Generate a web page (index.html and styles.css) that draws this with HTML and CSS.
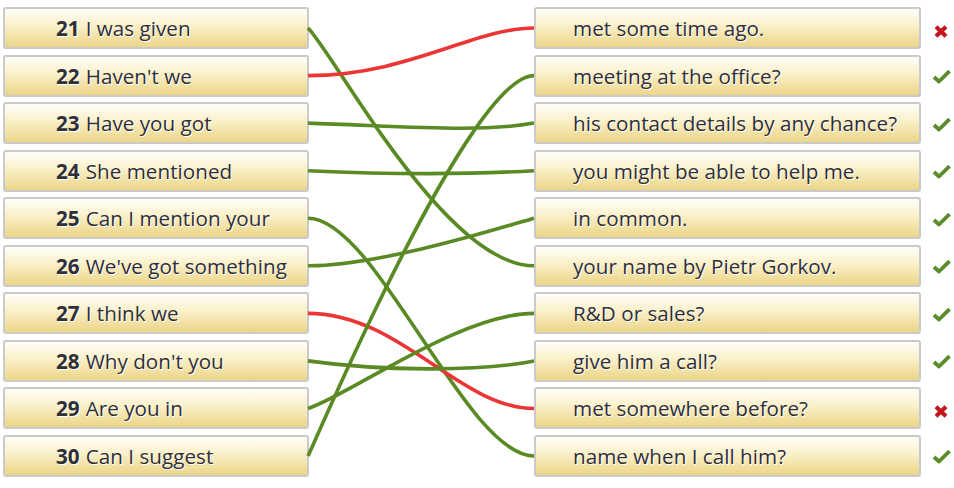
FILE: index.html
```html
<!DOCTYPE html>
<html lang="en">
<head>
<meta charset="utf-8">
<title>Matching exercise</title>
<link rel="stylesheet" href="styles.css">
</head>
<body>
<div class="match">
  <div class="col left">
    <div class="item"><b>21</b> I was given</div>
    <div class="item"><b>22</b> Haven't we</div>
    <div class="item"><b>23</b> Have you got</div>
    <div class="item"><b>24</b> She mentioned</div>
    <div class="item"><b>25</b> Can I mention your</div>
    <div class="item"><b>26</b> We've got something</div>
    <div class="item"><b>27</b> I think we</div>
    <div class="item"><b>28</b> Why don't you</div>
    <div class="item"><b>29</b> Are you in</div>
    <div class="item"><b>30</b> Can I suggest</div>
  </div>
  <svg class="links" width="225" height="470" viewBox="309 7 225 470">
    <path class="ok" d="M308,28 C335,55 445,265.8 534,265.8"/>
    <path class="bad" d="M308,75.6 C408,75.6 474,28 534,28"/>
    <path class="ok" d="M308,123.1 C400,126 480,133 534,123.1"/>
    <path class="ok" d="M308,170.7 C380,174 460,175 534,170.7"/>
    <path class="ok" d="M308,218.2 C376,218.2 466,456 534,456"/>
    <path class="ok" d="M308,265.8 C380,265.8 500,228 534,218.2"/>
    <path class="bad" d="M308,313.4 C400,313.4 460,408.5 534,408.5"/>
    <path class="ok" d="M308,360.9 C380,371 480,372 534,360.9"/>
    <path class="ok" d="M308,408.5 C350,395 460,313.4 534,313.4"/>
    <path class="ok" d="M308,456 C316,440 470,75.6 534,75.6"/>
  </svg>
  <div class="col right">
    <div class="item">met some time ago.</div>
    <div class="item">meeting at the office?</div>
    <div class="item">his contact details by any chance?</div>
    <div class="item">you might be able to help me.</div>
    <div class="item">in common.</div>
    <div class="item">your name by Pietr Gorkov.</div>
    <div class="item">R&amp;D or sales?</div>
    <div class="item">give him a call?</div>
    <div class="item">met somewhere before?</div>
    <div class="item">name when I call him?</div>
  </div>
  <div class="col marks">
    <div class="mark wrong"><svg width="14" height="13" viewBox="0 0 14 13"><path d="M2,1.8 L12,11.2 M12,1.8 L2,11.2"/></svg></div>
    <div class="mark right-mark"><svg width="19" height="15" viewBox="0 0 19 15"><path d="M2,8 L7,12.5 L17.5,2.2"/></svg></div>
    <div class="mark right-mark"><svg width="19" height="15" viewBox="0 0 19 15"><path d="M2,8 L7,12.5 L17.5,2.2"/></svg></div>
    <div class="mark right-mark"><svg width="19" height="15" viewBox="0 0 19 15"><path d="M2,8 L7,12.5 L17.5,2.2"/></svg></div>
    <div class="mark right-mark"><svg width="19" height="15" viewBox="0 0 19 15"><path d="M2,8 L7,12.5 L17.5,2.2"/></svg></div>
    <div class="mark right-mark"><svg width="19" height="15" viewBox="0 0 19 15"><path d="M2,8 L7,12.5 L17.5,2.2"/></svg></div>
    <div class="mark right-mark"><svg width="19" height="15" viewBox="0 0 19 15"><path d="M2,8 L7,12.5 L17.5,2.2"/></svg></div>
    <div class="mark right-mark"><svg width="19" height="15" viewBox="0 0 19 15"><path d="M2,8 L7,12.5 L17.5,2.2"/></svg></div>
    <div class="mark wrong"><svg width="14" height="13" viewBox="0 0 14 13"><path d="M2,1.8 L12,11.2 M12,1.8 L2,11.2"/></svg></div>
    <div class="mark right-mark"><svg width="19" height="15" viewBox="0 0 19 15"><path d="M2,8 L7,12.5 L17.5,2.2"/></svg></div>
  </div>
</div>
</body>
</html>
```
FILE: styles.css
```css
html, body {
  margin: 0;
  padding: 0;
  background: #ffffff;
}

body {
  font-family: "Open Sans", "DejaVu Sans", sans-serif;
  color: #333333;
}

.match {
  display: flex;
  align-items: flex-start;
  padding: 7px 0 0 3px;
}

.col {
  flex: none;
  display: flex;
  flex-direction: column;
  gap: 5.56px;
}

.left {
  width: 306px;
}

.right {
  width: 387px;
}

.item {
  box-sizing: border-box;
  height: 42px;
  display: flex;
  align-items: center;
  border: 2px solid #cacaca;
  border-radius: 3px;
  background: linear-gradient(to bottom, #fffefa 0%, #faf0c8 45%, #ebd588 100%);
  font-size: 20.7px;
  color: #2f2f38;
  text-shadow: 1px 1px 0 #ffffff;
  white-space: nowrap;
}

.left .item {
  padding-left: 51px;
}

.right .item {
  padding-left: 37px;
}

.item b {
  font-weight: 700;
  margin-right: 6px;
}

.links {
  flex: none;
  overflow: visible;
}

.links path {
  fill: none;
  stroke-width: 3.6;
}

.links .ok {
  stroke: #5a8a24;
}

.links .bad {
  stroke: #ec3535;
}

.marks {
  width: 33px;
}

.mark {
  box-sizing: border-box;
  height: 42px;
  padding-left: 7px;
  display: flex;
  align-items: center;
  justify-content: center;
}

.mark svg {
  display: block;
}

.wrong svg {
  margin-top: 7px;
}

.wrong path {
  fill: none;
  stroke: #c4161c;
  stroke-width: 4.2;
}

.right-mark svg {
  margin-top: 2px;
}

.right-mark path {
  fill: none;
  stroke: #5b8c2b;
  stroke-width: 3.8;
  stroke-linejoin: round;
}
```
